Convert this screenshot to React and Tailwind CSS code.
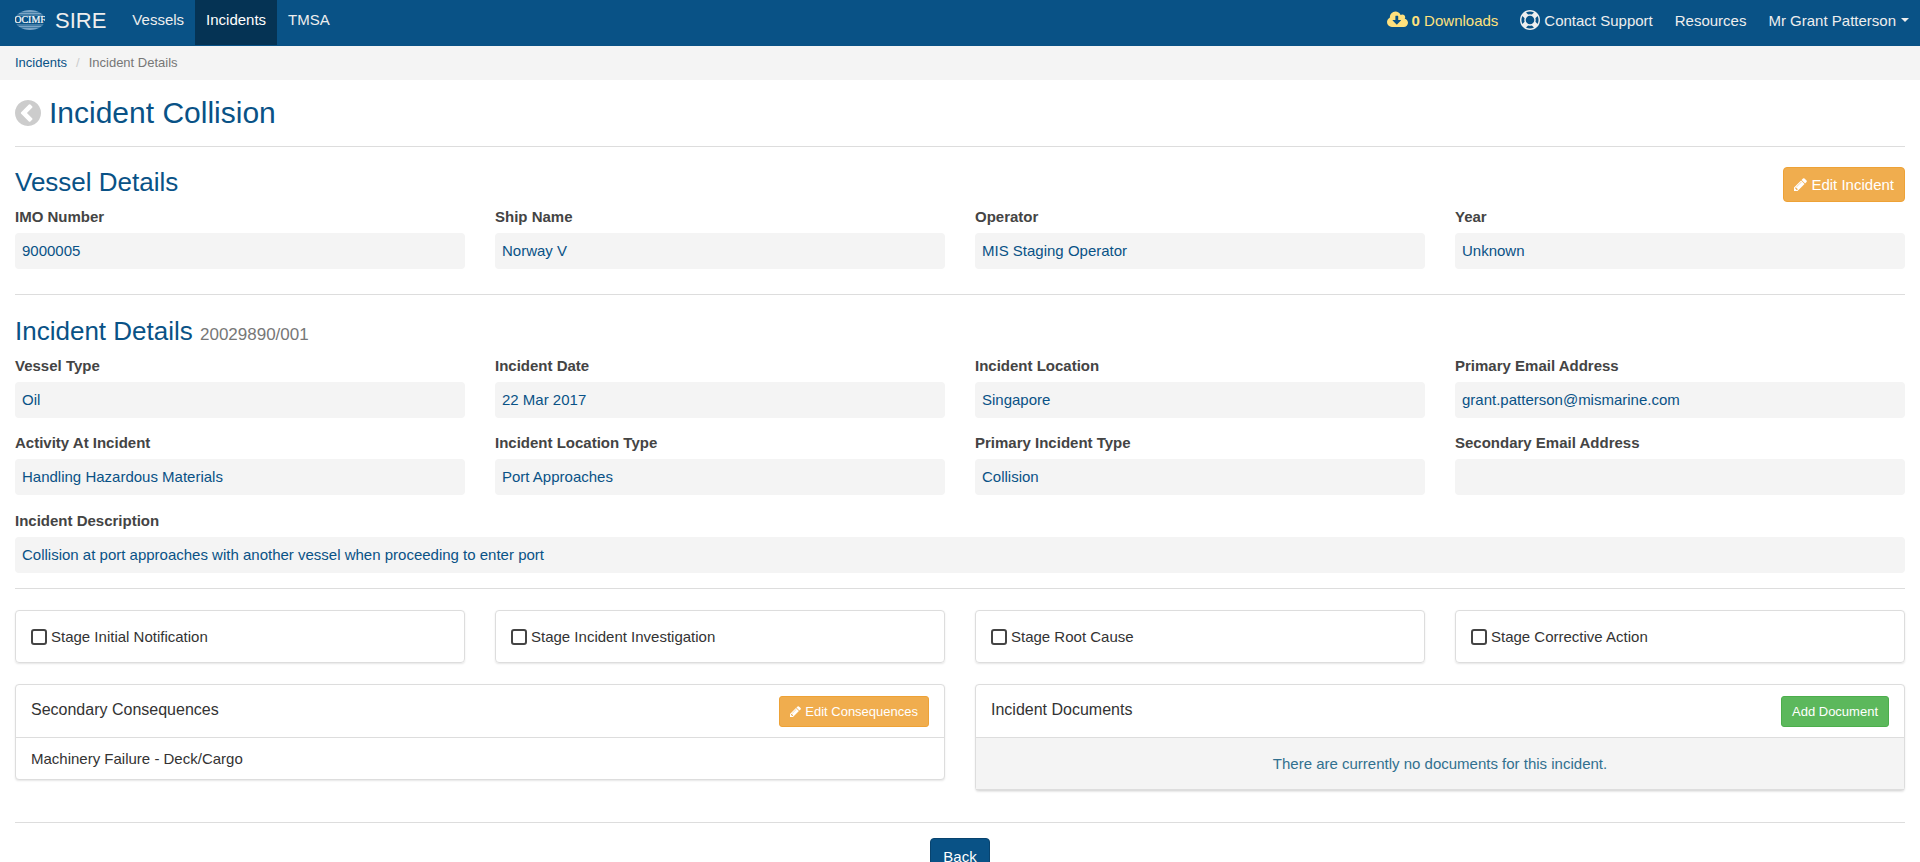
const vesselFields = [
  { id: "imo", label: "IMO Number", value: "9000005" },
  { id: "ship", label: "Ship Name", value: "Norway V" },
  { id: "operator", label: "Operator", value: "MIS Staging Operator" },
  { id: "year", label: "Year", value: "Unknown" },
];

const incidentFields = [
  { id: "vessel-type", label: "Vessel Type", value: "Oil" },
  { id: "date", label: "Incident Date", value: "22 Mar 2017" },
  { id: "location", label: "Incident Location", value: "Singapore" },
  { id: "email-1", label: "Primary Email Address", value: "grant.patterson@mismarine.com" },
  { id: "activity", label: "Activity At Incident", value: "Handling Hazardous Materials" },
  { id: "location-type", label: "Incident Location Type", value: "Port Approaches" },
  { id: "incident-type", label: "Primary Incident Type", value: "Collision" },
  { id: "email-2", label: "Secondary Email Address", value: "" },
];

const stages = [
  { id: "initial", label: "Stage Initial Notification" },
  { id: "investigation", label: "Stage Incident Investigation" },
  { id: "root-cause", label: "Stage Root Cause" },
  { id: "corrective", label: "Stage Corrective Action" },
];

const Logo = () => (
  <svg width="30" height="20" viewBox="0 0 30 20" aria-hidden="true">
    <clipPath id="globe">
      <ellipse cx="15" cy="10" rx="15" ry="10" />
    </clipPath>
    <g clipPath="url(#globe)" fill="#7ba5c6">
      <rect y="0" width="30" height="2" />
      <rect y="2.5" width="30" height="1.5" />
      <rect y="4.5" width="30" height="1" />
      <rect y="14.5" width="30" height="1" />
      <rect y="16" width="30" height="1.5" />
      <rect y="18" width="30" height="2" />
    </g>
    <text
      x="15"
      y="13"
      textAnchor="middle"
      fontFamily="Liberation Serif, serif"
      fontSize="10"
      fill="#fff"
      stroke="#fff"
      strokeWidth="0.2"
    >
      OCIMF
    </text>
  </svg>
);

const CloudDownloadIcon = () => (
  <svg width="21" height="20" viewBox="0 0 1920 1792" fill="currentColor" aria-hidden="true">
    <path d="M1280 928q0-14-9-23t-23-9h-224v-352q0-13-9.5-22.5t-22.5-9.5h-192q-13 0-22.5 9.5t-9.5 22.5v352h-224q-13 0-22.5 9.5t-9.5 22.5q0 14 9 23l352 352q9 9 23 9t23-9l351-351q10-12 10-24zm640 224q0 159-112.5 271.5t-271.5 112.5h-1088q-185 0-316.5-131.5t-131.5-316.5q0-130 70-240t188-165q-2-30-2-43 0-212 150-362t362-150q156 0 285.5 87t188.5 231q71-62 166-62 106 0 181 75t75 181q0 76-41 138 130 31 213.5 135.5t83.5 238.5z" />
  </svg>
);

const LifeRingIcon = () => (
  <svg width="20" height="20" viewBox="0 0 1792 1792" fill="currentColor" aria-hidden="true">
    <path d="M896 0q182 0 348 71t286 191 191 286 71 348-71 348-191 286-286 191-348 71-348-71-286-191-191-286-71-348 71-348 191-286 286-191 348-71zm0 128q-190 0-361 90l194 194q82-28 167-28t167 28l194-194q-171-90-361-90zm-678 1129l194-194q-28-82-28-167t28-167l-194-194q-90 171-90 361t90 361zm678 407q190 0 361-90l-194-194q-82 28-167 28t-167-28l-194 194q171 90 361 90zm0-384q159 0 271.5-112.5t112.5-271.5-112.5-271.5-271.5-112.5-271.5 112.5-112.5 271.5 112.5 271.5 271.5 112.5zm484-217l194 194q90-171 90-361t-90-361l-194 194q28 82 28 167t-28 167z" />
  </svg>
);

const PencilIcon = ({ size }) => (
  <svg width={size} height={size} viewBox="128 128 1536 1536" fill="currentColor" aria-hidden="true">
    <path d="M491 1536l91-91-235-235-91 91v107h128v128h107zm523-928q0-22-22-22-10 0-17 7l-542 542q-7 7-7 17 0 22 22 22 10 0 17-7l542-542q7-7 7-17zm-54-192l416 416-832 832h-416v-416zm683 96q0 53-37 90l-166 166-416-416 166-165q36-38 90-38 53 0 91 38l235 234q37 39 37 91z" />
  </svg>
);

const ChevronCircleIcon = () => (
  <svg width="26" height="26" viewBox="128 128 1536 1536" fill="currentColor" aria-hidden="true">
    <path d="M1037 1395l102-102q19-19 19-45t-19-45l-307-307 307-307q19-19 19-45t-19-45l-102-102q-19-19-45-19t-45 19l-454 454q-19 19-19 45t19 45l454 454q19 19 45 19t45-19zm627-499q0 209-103 385.5t-279.5 279.5-385.5 103-385.5-103-279.5-279.5-103-385.5 103-385.5 279.5-279.5 385.5-103 385.5 103 279.5 279.5 103 385.5z" />
  </svg>
);

const Field = ({ id, label, value }) => (
  <div>
    <label htmlFor={id} className="mb-[7px] block leading-[19px] font-bold text-[#444]">
      {label}
    </label>
    <input
      id={id}
      readOnly
      value={value}
      className="block h-9 w-full rounded bg-[#f4f4f4] px-[7px] pb-[2px] text-[#095286] outline-none"
    />
  </div>
);

const Panel = ({ title, action, children }) => (
  <section className="rounded border border-[#ddd] bg-white shadow-[0_1px_2px_rgba(0,0,0,0.1)]">
    <div className="flex items-start justify-between px-[15px] pt-[11px] pb-[10px]">
      <h3 className="text-base leading-7">{title}</h3>
      {action}
    </div>
    {children}
  </section>
);

const App = () => {
  return (
    <div className="min-h-screen bg-white font-['Liberation_Sans',Arial,sans-serif] text-[15px] leading-[21px] text-[#333]">
      <nav className="flex h-[46px] justify-between border-b border-[#095286] bg-[#095286] text-[#eee]">
        <div className="flex">
          <a href="#home" className="flex h-10 items-center gap-[10px] px-[15px] text-[22px]">
            <Logo />
            SIRE
          </a>
          <a href="#vessels" className="px-[11px] pt-[9px]">Vessels</a>
          <a href="#incidents" className="bg-[#053354] px-[11px] pt-[9px] text-white">Incidents</a>
          <a href="#tmsa" className="px-[11px] pt-[9px]">TMSA</a>
        </div>
        <div className="flex h-10 items-center">
          <a href="#downloads" className="flex items-center gap-1 px-[11px] text-[#ffe17d]">
            <CloudDownloadIcon />
            <span><b>0</b> Downloads</span>
          </a>
          <a href="#support" className="flex items-center gap-1 px-[11px]">
            <LifeRingIcon />
            Contact Support
          </a>
          <a href="#resources" className="px-[11px]">Resources</a>
          <button type="button" className="flex items-center gap-[5px] px-[11px]">
            Mr Grant Patterson
            <svg width="8" height="4" viewBox="0 0 8 4" fill="currentColor" aria-hidden="true">
              <path d="M0 0h8L4 4z" />
            </svg>
          </button>
        </div>
      </nav>

      <ol className="flex h-[34px] bg-[#f4f4f4] px-[15px] pt-[6px] text-[13px]">
        <li><a href="#incidents" className="text-[#095286]">Incidents</a></li>
        <li className="px-[9px] text-[#ccc]">/</li>
        <li className="text-[#777]">Incident Details</li>
      </ol>

      <main className="px-[15px] pb-5">
        <div className="flex items-center gap-2 pt-4">
          <a href="#back" aria-label="Back to incidents" className="text-[#ccc]">
            <ChevronCircleIcon />
          </a>
          <h1 className="text-[30px] leading-[33px] text-[#095286]">Incident Collision</h1>
        </div>

        <hr className="mt-[17px] mb-5 border-[#ddd]" />

        <div className="mb-[10px] flex h-[30px] items-start justify-between">
          <h2 className="text-[26px] leading-[30px] text-[#095286]">Vessel Details</h2>
          <button
            type="button"
            className="flex h-[35px] items-center gap-1 rounded border border-[#eea236] bg-[#f0ad4e] px-[10px] pb-px text-white"
          >
            <PencilIcon size={13} />
            Edit Incident
          </button>
        </div>
        <div className="grid grid-cols-4 gap-x-[30px]">
          {vesselFields.map((field) => (
            <Field key={field.id} {...field} />
          ))}
        </div>

        <hr className="mt-[25px] mb-[21px] border-[#ddd]" />

        <h2 className="mb-[10px] text-[26px] leading-[30px] text-[#095286]">
          Incident Details <small className="text-[17px] leading-none text-[#777]">20029890/001</small>
        </h2>
        <div className="grid grid-cols-4 gap-x-[30px] gap-y-[15px]">
          {incidentFields.map((field) => (
            <Field key={field.id} {...field} />
          ))}
        </div>
        <div className="mt-4">
          <Field
            id="description"
            label="Incident Description"
            value="Collision at port approaches with another vessel when proceeding to enter port"
          />
        </div>

        <hr className="mt-[15px] mb-[21px] border-[#ddd]" />

        <div className="grid grid-cols-4 gap-x-[30px]">
          {stages.map((stage) => (
            <label
              key={stage.id}
              className="flex items-center gap-1 rounded border border-[#ddd] p-[15px] shadow-[0_1px_2px_rgba(0,0,0,0.1)]"
            >
              <input
                type="checkbox"
                className="size-4 appearance-none rounded-[3px] border-2 border-[#444] bg-white"
              />
              {stage.label}
            </label>
          ))}
        </div>

        <div className="mt-[21px] grid grid-cols-2 items-start gap-x-[30px]">
          <Panel
            title="Secondary Consequences"
            action={
              <button
                type="button"
                className="flex h-[31px] items-center gap-1 rounded-[3px] border border-[#eea236] bg-[#f0ad4e] px-[10px] text-[13px] text-white"
              >
                <PencilIcon size={11} />
                Edit Consequences
              </button>
            }
          >
            <p className="border-t border-[#ddd] px-[15px] py-[10px]">Machinery Failure - Deck/Cargo</p>
          </Panel>
          <Panel
            title="Incident Documents"
            action={
              <button
                type="button"
                className="h-[31px] rounded-[3px] border border-[#4cae4c] bg-[#5cb85c] px-[10px] text-[13px] text-white"
              >
                Add Document
              </button>
            }
          >
            <p className="border-y border-[#ddd] bg-[#f4f4f4] p-[15px] text-center text-[#31708f]">
              There are currently no documents for this incident.
            </p>
          </Panel>
        </div>

        <hr className="mt-[31px] mb-[15px] border-[#ddd]" />

        <div className="flex justify-center">
          <button type="button" className="h-9 rounded border border-[#08436e] bg-[#095286] px-3 text-white">
            Back
          </button>
        </div>
      </main>
    </div>
  );
};

export default App;
